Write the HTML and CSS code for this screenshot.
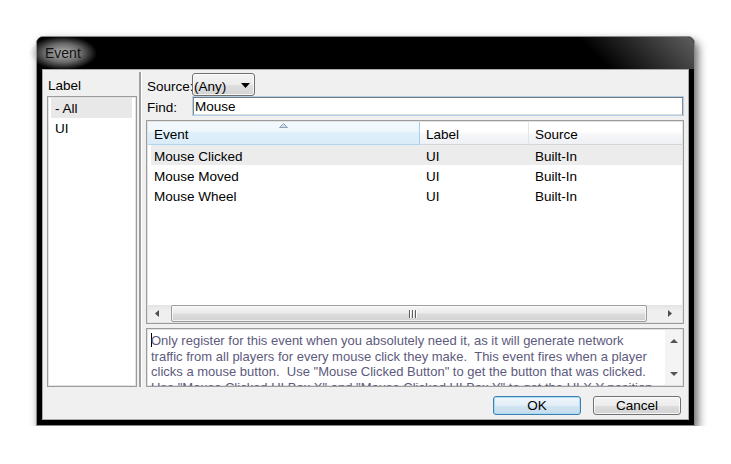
FILE: index.html
```html
<!DOCTYPE html>
<html>
<head>
<meta charset="utf-8">
<title>Event</title>
<link rel="stylesheet" href="styles.css">
</head>
<body>
<div class="window">
  <div class="titlebar"><span class="title">Event</span></div>
  <div class="client">
    <div class="panes">
      <div class="left">
        <div class="caption">Label</div>
        <div class="listbox">
          <div class="lb-item selected">- All</div>
          <div class="lb-item">UI</div>
        </div>
      </div>
      <div class="splitter"></div>
      <div class="right">
        <div class="field-row source-row">
          <span class="field-label">Source:</span>
          <div class="combo">
            <span class="combo-text">(Any)</span>
            <svg class="combo-arrow" width="9" height="5" viewBox="0 0 9 5"><path d="M0 0 L9 0 L4.5 5 Z" fill="#000"/></svg>
          </div>
        </div>
        <div class="field-row find-row">
          <span class="field-label">Find:</span>
          <div class="textbox">Mouse</div>
        </div>
        <div class="listview">
          <div class="lv-header">
            <div class="lv-col col-event sorted">Event
              <svg class="sort-arrow" width="9" height="5" viewBox="0 0 9 5"><path d="M0.5 4.5 L4.5 0.5 L8.5 4.5 Z" fill="#d3e0ec" stroke="#8ea3b9" stroke-width="1" stroke-linejoin="round"/></svg>
            </div>
            <div class="lv-col col-label">Label</div>
            <div class="lv-col col-source">Source</div>
          </div>
          <div class="lv-body">
            <div class="lv-row selected"><span class="cell col-event">Mouse Clicked</span><span class="cell col-label">UI</span><span class="cell col-source">Built-In</span></div>
            <div class="lv-row"><span class="cell col-event">Mouse Moved</span><span class="cell col-label">UI</span><span class="cell col-source">Built-In</span></div>
            <div class="lv-row"><span class="cell col-event">Mouse Wheel</span><span class="cell col-label">UI</span><span class="cell col-source">Built-In</span></div>
          </div>
          <div class="hscroll">
            <div class="hs-btn hs-left"><svg width="4" height="7" viewBox="0 0 4 7"><path d="M4 0 L0 3.5 L4 7 Z" fill="#4e4e4e"/></svg></div>
            <div class="hs-thumb">
              <svg width="9" height="8" viewBox="0 0 9 8"><rect x="0" y="0" width="1" height="8" fill="#5f5f5f"/><rect x="1" y="0" width="1" height="8" fill="#fff"/><rect x="3" y="0" width="1" height="8" fill="#5f5f5f"/><rect x="4" y="0" width="1" height="8" fill="#fff"/><rect x="6" y="0" width="1" height="8" fill="#5f5f5f"/><rect x="7" y="0" width="1" height="8" fill="#fff"/></svg>
            </div>
            <div class="hs-track"></div>
            <div class="hs-btn hs-right"><svg width="4" height="7" viewBox="0 0 4 7"><path d="M0 0 L4 3.5 L0 7 Z" fill="#4e4e4e"/></svg></div>
          </div>
        </div>
        <div class="desc">
          <div class="desc-text"><span class="caret"></span>Only register for this event when you absolutely need it, as it will generate network<br>traffic from all players for every mouse click they make.&nbsp; This event fires when a player<br>clicks a mouse button.&nbsp; Use "Mouse Clicked Button" to get the button that was clicked.<br>Use "Mouse Clicked UI Box X" and "Mouse Clicked UI Box Y" to get the UI X,Y position.</div>
          <div class="vscroll">
            <svg width="8" height="4" viewBox="0 0 8 4"><path d="M0 4 L4 0 L8 4 Z" fill="#555"/></svg>
            <svg width="8" height="4" viewBox="0 0 8 4"><path d="M0 0 L4 4 L8 0 Z" fill="#555"/></svg>
          </div>
        </div>
      </div>
    </div>
    <div class="footer">
      <button class="btn btn-default">OK</button>
      <button class="btn">Cancel</button>
    </div>
  </div>
</div>
</body>
</html>
```

FILE: styles.css
```css
html, body {
  margin: 0;
  padding: 0;
  background: #ffffff;
}

body {
  font-family: "Liberation Sans", Arial, sans-serif;
  font-size: 13.5px;
  color: #000;
}

.window {
  margin: 36px 0 0 36px;
  width: 659px;
  height: 390px;
  box-sizing: border-box;
  border: 1px solid #8a8a8a;
  border-radius: 7px 7px 1px 1px;
  background: #000;
  padding: 0 5px 5px;
  display: flex;
  flex-direction: column;
  box-shadow: 3px 5px 10px rgba(0, 0, 0, 0.6);
}

.titlebar {
  flex: none;
  height: 32px;
  margin: 0 -5px;
  padding-left: 8px;
  border-radius: 6px 6px 0 0;
  background: linear-gradient(45deg, #000 83%, #5e5e5e 100%);
  display: flex;
  align-items: center;
}

.title {
  font-size: 14px;
  color: #111;
  padding: 9px 16px;
  margin-left: -16px;
  background: radial-gradient(closest-side, rgba(190, 190, 190, 0.95), rgba(150, 150, 150, 0.7) 55%, rgba(0, 0, 0, 0) 100%);
}

.client {
  flex: 1;
  background: #f0f0f0;
  border: 1px solid #a9a9a9;
  display: flex;
  flex-direction: column;
  min-height: 0;
}

.panes {
  display: flex;
  height: 318px;
  flex: none;
}

/* left pane */
.left {
  flex: none;
  width: 94px;
  box-sizing: border-box;
  padding-left: 4px;
  display: flex;
  flex-direction: column;
}

.caption {
  height: 16px;
  padding: 7px 0 3px 1px;
  line-height: 18px;
}

.listbox {
  height: 291px;
  box-sizing: border-box;
  border: 1px solid #9c9c9c;
  padding: 1px;
  background: #fff;
  box-shadow: inset 0 0 0 1px #e2e2e2;
}

.lb-item {
  height: 20px;
  line-height: 22px;
  margin: 0 3px 0 2px;
  padding-left: 4px;
}

.lb-item.selected {
  background: #e8e8e8;
}

.splitter {
  flex: none;
  width: 6px;
  margin: 2px 0 1px;
  background: linear-gradient(to right, transparent 2px, #a0a0a0 2px, #a0a0a0 4px, #ffffff 4px, #ffffff 5px, transparent 5px);
}

/* right pane */
.right {
  flex: 1;
  min-width: 0;
  padding: 0 4px 0 3px;
  display: flex;
  flex-direction: column;
}

.field-row {
  display: flex;
  align-items: center;
}

.source-row {
  padding-top: 3px;
  height: 23px;
}

.find-row {
  height: 20px;
}

.field-label {
  width: 46px;
  box-sizing: border-box;
  padding: 3px 0 0 1px;
  flex: none;
}

.combo {
  width: 63px;
  height: 23px;
  box-sizing: border-box;
  border: 1px solid #707070;
  border-radius: 3px;
  background: linear-gradient(#f4f4f4 0%, #ececec 50%, #e0e0e0 50%, #d4d4d4 100%);
  box-shadow: inset 0 0 0 1px rgba(255, 255, 255, 0.75);
  display: flex;
  align-items: center;
  justify-content: space-between;
  padding: 1px 4px 0 1px;
}

.combo-text {
  padding-top: 2px;
}

.combo-arrow {
  display: block;
}

.textbox {
  flex: 1;
  height: 20px;
  box-sizing: border-box;
  border: 1px solid #b2d0ea;
  box-shadow: inset 0 1px 0 #777, inset 1px 0 0 #8a8a8a, inset -1px 0 0 #8a8a8a, inset 0 -1px 0 #dcdcdc;
  background: #fff;
  padding-left: 2px;
  line-height: 20px;
}

/* list view */
.listview {
  margin-top: 4px;
  height: 204px;
  box-sizing: border-box;
  border: 1px solid #9c9c9c;
  padding: 1px;
  background: #fff;
  box-shadow: inset 0 0 0 1px #e2e2e2;
  display: flex;
  flex-direction: column;
  flex: none;
}

.lv-header {
  display: flex;
  height: 23px;
  flex: none;
}

.lv-col {
  box-sizing: border-box;
  height: 23px;
  padding: 3px 0 0 6px;
  display: flex;
  align-items: center;
  border-right: 1px solid #e2e5ea;
  border-bottom: 1px solid #d5d5d5;
  background: linear-gradient(#ffffff 0%, #ffffff 45%, #f6f7f9 55%, #eef0f3 100%);
}

.lv-col.sorted {
  position: relative;
  border-right-color: #a6d1ec;
  border-bottom-color: #b0d6ee;
  background: linear-gradient(#f3f9fd 0%, #eef7fc 40%, #e0f0fa 48%, #d9ecf8 100%);
}

.sort-arrow {
  position: absolute;
  top: 1px;
  left: 131px;
}

.col-event {
  width: 272px;
  flex: none;
}

.col-label {
  width: 109px;
  flex: none;
}

.col-source {
  flex: 1;
  border-right: none;
}

.lv-body {
  flex: 1;
}

.lv-row {
  display: flex;
  height: 20px;
  align-items: center;
}

.lv-row.selected {
  background: linear-gradient(to right, #ffffff 3px, #ececec 3px);
}

.cell {
  box-sizing: border-box;
  padding: 2px 0 0 6px;
  white-space: nowrap;
}

/* horizontal scrollbar */
.hscroll {
  flex: none;
  height: 17px;
  display: flex;
  align-items: stretch;
  background: linear-gradient(#e4e4e4 0%, #efefef 35%, #f0f0f0 100%);
}

.hs-btn {
  display: flex;
  align-items: center;
  flex: none;
}

.hs-left {
  width: 22px;
  padding-left: 7px;
  box-sizing: border-box;
}

.hs-right {
  width: 22px;
  justify-content: flex-end;
  padding-right: 10px;
  box-sizing: border-box;
}

.hs-thumb {
  flex: none;
  width: 476px;
  margin: 0 0 0 1px;
  box-sizing: border-box;
  border: 1px solid #9d9d9d;
  border-radius: 2px;
  background: linear-gradient(#f5f5f5 0%, #ebebeb 45%, #dcdcdc 55%, #d2d2d2 100%);
  box-shadow: inset 0 0 0 1px rgba(255, 255, 255, 0.7);
  display: flex;
  align-items: center;
  justify-content: center;
  padding-left: 8px;
}

.hs-track {
  flex: 1;
}

/* description */
.desc {
  margin-top: 4px;
  height: 59px;
  flex: none;
  box-sizing: border-box;
  border: 1px solid #9c9c9c;
  background: #fff;
  box-shadow: inset 0 0 0 1px #e2e2e2;
  display: flex;
  overflow: hidden;
}

.desc-text {
  flex: 1;
  min-width: 0;
  padding: 4px 0 0 4px;
  font-size: 13px;
  line-height: 15.7px;
  color: #5d5a7d;
  white-space: nowrap;
  overflow: hidden;
}

.caret {
  display: inline-block;
  width: 1px;
  height: 14px;
  background: #000;
  margin-right: -1px;
  vertical-align: -2px;
}

.vscroll {
  width: 17px;
  flex: none;
  margin: 1px 1px 1px 0;
  background: #f4f4f4;
  display: flex;
  flex-direction: column;
  align-items: center;
  justify-content: space-between;
  padding: 9px 0 9px;
  box-sizing: border-box;
}

/* footer buttons */
.footer {
  display: flex;
  justify-content: flex-end;
  gap: 12px;
  padding: 8px 7px 0 0;
}

.btn {
  width: 88px;
  height: 19px;
  box-sizing: border-box;
  border: 1px solid #707070;
  border-radius: 3px;
  padding: 0;
  font-family: "Liberation Sans", Arial, sans-serif;
  font-size: 13.5px;
  color: #000;
  line-height: 16px;
  background: linear-gradient(#f4f4f4 0%, #ececec 50%, #dedede 50%, #d2d2d2 100%);
  box-shadow: inset 0 0 0 1px rgba(255, 255, 255, 0.75);
}

.btn-default {
  border-color: #3c7fb1;
  background: linear-gradient(#eef6fb 0%, #e2eef7 50%, #d2e4f1 50%, #c6dcec 100%);
  box-shadow: inset 0 0 0 1px #a9dcf7;
}
```
